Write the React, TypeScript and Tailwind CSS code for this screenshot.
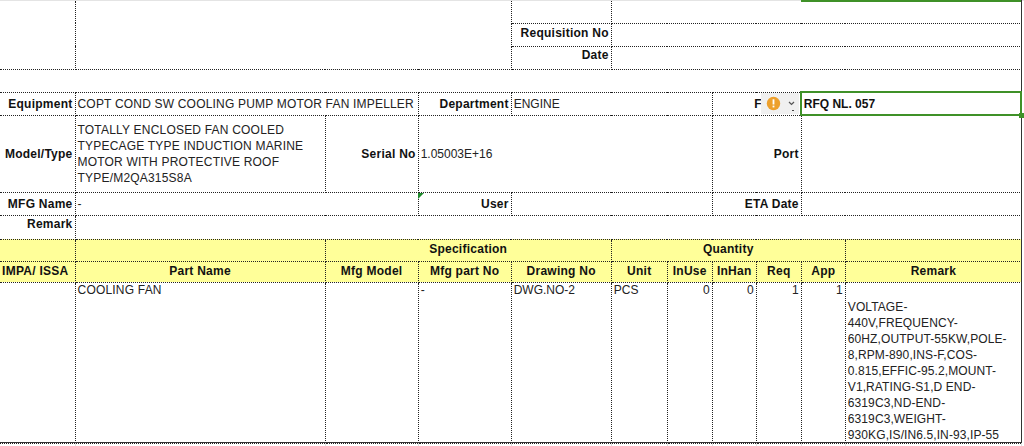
const border = "border border-dotted border-[#222]";
const lab = `${border} px-[2px] text-right font-bold align-middle whitespace-nowrap overflow-hidden tracking-[0.25px] text-[#111]`;
const val = `${border} px-[2px] text-left align-middle`;
const head = `${border} px-[2px] pb-[2px] text-center font-bold bg-[#ffff99] align-middle whitespace-nowrap tracking-[0.25px] text-[#111]`;
const cell = `${border} px-[2px] align-top leading-[14px]`;
const stub = "border-x border-solid border-[#e0e0e0]";

export default function App() {
  return (
    <div className="relative h-[446px] w-[1024px] overflow-hidden bg-white font-['Liberation_Sans',Arial,sans-serif] text-[12px] leading-[16px] text-[#222]">
      <div className="h-[1px] bg-[#e4e4e4]" />
      <table className="w-[1022px] table-fixed border-collapse">
        <colgroup>
          <col className="w-[75px]" />
          <col className="w-[250px]" />
          <col className="w-[93px]" />
          <col className="w-[93px]" />
          <col className="w-[100px]" />
          <col className="w-[56px]" />
          <col className="w-[45px]" />
          <col className="w-[44px]" />
          <col className="w-[45px]" />
          <col className="w-[44px]" />
          <col className="w-[176px]" />
        </colgroup>
        <tbody>
          <tr className="h-[22px]">
            <td rowSpan={3} className={`${border} border-t-0 border-l-0`} />
            <td rowSpan={3} colSpan={3} className={`${border} border-t-0`} />
            <td className={`${border} border-t-0`} />
            <td colSpan={6} className={`${border} border-t-0`} />
          </tr>
          <tr className="h-[23px]">
            <td className={`${lab} pb-[4px] tracking-[0.1px]`}>Requisition No</td>
            <td colSpan={6} className={val} />
          </tr>
          <tr className="h-[23px]">
            <td className={`${lab} pb-[5px]`}>Date</td>
            <td colSpan={6} className={val} />
          </tr>
          <tr className="h-[23px]">
            <td colSpan={11} className={`${border} border-x-0`} />
          </tr>
          <tr className="h-[23px]">
            <td className={`${lab} border-l-0`}>Equipment</td>
            <td colSpan={2} className={`${val} whitespace-nowrap tracking-[0.19px]`}>COPT COND SW COOLING PUMP MOTOR FAN IMPELLER</td>
            <td className={lab}>Department</td>
            <td colSpan={3} className={val}>ENGINE</td>
            <td colSpan={2} className={lab}>
              <span className="pr-[37px]">F</span>
            </td>
            <td colSpan={2} className={`${val} font-bold text-[#111]`}>RFQ NL. 057</td>
          </tr>
          <tr className="h-[77px]">
            <td className={`${lab} border-l-0`}>Model/Type</td>
            <td className={`${val} tracking-[0.2px]`}>
              TOTALLY ENCLOSED FAN COOLED TYPECAGE TYPE INDUCTION MARINE MOTOR WITH PROTECTIVE ROOF TYPE/M2QA315S8A
            </td>
            <td className={lab}>Serial No</td>
            <td colSpan={4} className={val}>1.05003E+16</td>
            <td colSpan={2} className={lab}>Port</td>
            <td colSpan={2} className={val} />
          </tr>
          <tr className="h-[23px]">
            <td className={`${lab} border-l-0`}>MFG Name</td>
            <td colSpan={2} className={val}>-</td>
            <td className={lab}>User</td>
            <td colSpan={3} className={val} />
            <td colSpan={2} className={lab}>ETA Date</td>
            <td colSpan={2} className={val} />
          </tr>
          <tr className="h-[24px]">
            <td className={`${lab} border-l-0 align-top`}>Remark</td>
            <td colSpan={10} className={val} />
          </tr>
          <tr className="h-[22px]">
            <td className={`${head} border-l-0`} />
            <td className={head} />
            <td colSpan={3} className={head}>Specification</td>
            <td colSpan={5} className={head}>Quantity</td>
            <td className={head} />
          </tr>
          <tr className="h-[21px]">
            <td className={`${head} border-l-0 pr-[4px] pl-0 tracking-[0.4px]`}>IMPA/ ISSA</td>
            <td className={head}>Part Name</td>
            <td className={head}>Mfg Model</td>
            <td className={head}>Mfg part No</td>
            <td className={head}>Drawing No</td>
            <td className={head}>Unit</td>
            <td className={head}>InUse</td>
            <td className={head}>InHan</td>
            <td className={head}>Req</td>
            <td className={head}>App</td>
            <td className={head}>Remark</td>
          </tr>
          <tr className="h-[160px]">
            <td className={`${cell} border-l-0`} />
            <td className={`${cell} tracking-[0.2px]`}>COOLING FAN</td>
            <td className={cell} />
            <td className={cell}>-</td>
            <td className={cell}>DWG.NO-2</td>
            <td className={cell}>PCS</td>
            <td className={`${cell} text-right`}>0</td>
            <td className={`${cell} text-right`}>0</td>
            <td className={`${cell} text-right`}>1</td>
            <td className={`${cell} text-right`}>1</td>
            <td className={`${border} px-[2px] align-top tracking-[0.1px]`}>
              <br />
              VOLTAGE-
              <br />
              440V,FREQUENCY-
              <br />
              60HZ,OUTPUT-55KW,POLE-
              <br />
              8,RPM-890,INS-F,COS-
              <br />
              0.815,EFFIC-95.2,MOUNT-
              <br />
              V1,RATING-S1,D END-
              <br />
              6319C3,ND-END-
              <br />
              6319C3,WEIGHT-
              <br />
              930KG,IS/IN6.5,IN-93,IP-55
            </td>
          </tr>
          <tr className="h-[4px]">
            <td className={`${stub} border-l-0`} />
            <td className={stub} />
            <td className={stub} />
            <td className={stub} />
            <td className={stub} />
            <td className={stub} />
            <td className={stub} />
            <td className={stub} />
            <td className={stub} />
            <td className={stub} />
            <td className={stub} />
          </tr>
        </tbody>
      </table>

      <div className="absolute left-[801px] top-0 h-[2px] w-[220px] bg-[#3f9128]" />
      <div className="absolute left-[1021px] top-0 h-[443px] w-[1px] bg-[#333]" />
      <div className="absolute left-0 top-[442px] h-[1px] w-[1022px] bg-[#333]" />
      <div className="absolute left-[800px] top-[91px] h-[25px] w-[222px] border-2 border-[#3f9128]" />
      <div className="absolute left-[1019px] top-[113px] h-[5px] w-[5px] bg-[#3f9128]" />
      <div className="absolute left-[418px] top-[193px] h-0 w-0 border-r-[6px] border-b-[6px] border-r-transparent border-b-transparent border-l-0 border-t-[6px] border-t-[#1f8a2c]" />
      <div className="absolute left-[761px] top-[93px] flex h-[21px] w-[38px] items-center bg-[#f0f0f0] pl-[5px]">
        <svg width="15" height="15" viewBox="0 0 15 15">
          <circle cx="7.5" cy="7.5" r="6.7" fill="#eda02d" />
          <rect x="6.6" y="3.3" width="1.8" height="5.2" fill="#fff" />
          <rect x="6.6" y="9.6" width="1.8" height="1.8" fill="#fff" />
        </svg>
        <svg className="ml-[7px]" width="7" height="5" viewBox="0 0 7 5">
          <path d="M1 1l2.5 2.5L6 1" fill="none" stroke="#555" strokeWidth="1.2" />
        </svg>
      </div>
      <div className="absolute left-[792px] top-[110px] h-[1px] w-[2px] bg-[#444]" />
    </div>
  );
}
